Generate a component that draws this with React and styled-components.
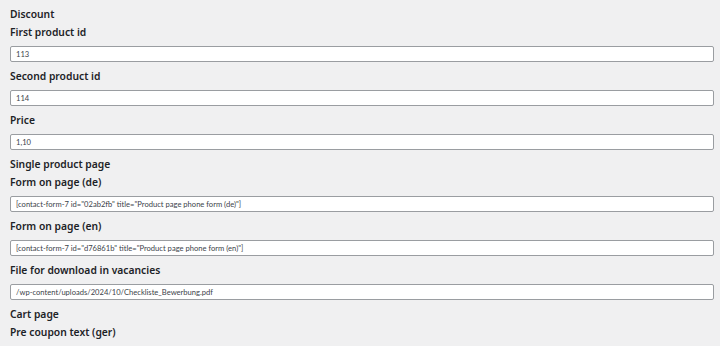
import React from "react";
import styled, { createGlobalStyle } from "styled-components";

const GlobalStyle = createGlobalStyle`
  html, body {
    margin: 0;
    padding: 0;
    background: #f0f0f1;
  }
  body {
    font-family: "Noto Sans", "Open Sans", sans-serif;
    color: #1d2327;
  }
`;

const Page = styled.div`
  display: flex;
  flex-direction: column;
  padding: 5px 6px 0 10px;
  width: 720px;
  height: 346px;
  box-sizing: border-box;
  overflow: hidden;
`;

const Heading = styled.div`
  font-size: 10.3px;
  font-weight: 600;
  line-height: 18px;
  height: 18px;
`;

const Field = styled.div`
  display: flex;
  flex-direction: column;
  margin-bottom: 5px;
`;

const Label = styled.label`
  font-size: 10.3px;
  font-weight: 600;
  line-height: 19px;
  height: 19px;
  margin-bottom: 4px;
`;

const Input = styled.input`
  box-sizing: border-box;
  width: 704px;
  height: 16px;
  margin: 0;
  padding: 0 5px;
  border: 1px solid #9a9da1;
  border-radius: 2px;
  background: #fff;
  font-family: Lato, "Noto Sans", sans-serif;
  font-size: 7.6px;
  color: #3c434a;
  outline: none;
`;

const rows = [
  { type: "heading", text: "Discount" },
  { type: "field", label: "First product id", value: "113" },
  { type: "field", label: "Second product id", value: "114" },
  { type: "field", label: "Price", value: "1,10" },
  { type: "heading", text: "Single product page" },
  {
    type: "field",
    label: "Form on page (de)",
    value: '[contact-form-7 id="02ab2fb" title="Product page phone form (de)"]',
  },
  {
    type: "field",
    label: "Form on page (en)",
    value: '[contact-form-7 id="d76861b" title="Product page phone form (en)"]',
  },
  {
    type: "field",
    label: "File for download in vacancies",
    value: "/wp-content/uploads/2024/10/Checkliste_Bewerbung.pdf",
  },
  { type: "heading", text: "Cart page" },
  { type: "label", text: "Pre coupon text (ger)" },
];

const App = () => {
  return (
    <>
      <GlobalStyle />
      <Page>
        {rows.map((row, i) => {
          if (row.type === "heading") return <Heading key={i}>{row.text}</Heading>;
          if (row.type === "label") return <Label key={i}>{row.text}</Label>;
          return (
            <Field key={i}>
              <Label>{row.label}</Label>
              <Input type="text" defaultValue={row.value} readOnly />
            </Field>
          );
        })}
      </Page>
    </>
  );
};

export default App;
